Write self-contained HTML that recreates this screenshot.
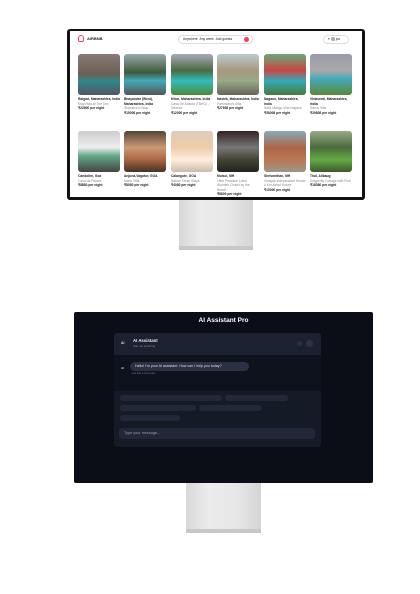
<!DOCTYPE html>
<html><head><meta charset="utf-8"><style>
*{margin:0;padding:0;box-sizing:border-box}
body{width:420px;height:594px;background:#fff;position:relative;overflow:hidden;font-family:"Liberation Sans",sans-serif}
.abs{position:absolute}
.f1{left:67px;top:29px;width:298px;height:171px;background:#111;border-radius:3px}
.s1{left:70px;top:31px;width:292px;height:166px;background:#fff;overflow:hidden}
.stand{background:linear-gradient(90deg,#d8d8d8,#ececec 30%,#e6e6e6 70%,#d4d4d4)}
.card{position:absolute;width:42px;font-size:3.3px;line-height:4.6px;color:#222}
.img{width:42px;height:41px;border-radius:3px;margin-bottom:2px}
.b{font-weight:bold}
.g{color:#888}
.f2{left:74px;top:312px;width:299px;height:171px;background:#0b0d17;border-radius:2px}
.pill{position:absolute;height:6px;border-radius:3px;background:#222838}
</style></head><body>
<div class="abs f1"></div>
<div class="abs s1">
 <div class="abs" style="left:8px;top:4px;width:6px;height:7px;border:1.2px solid #ff385c;border-radius:3px 3px 2px 2px"></div>
 <div class="abs b" style="left:17px;top:5px;font-size:4px;color:#222">AIRBNB</div>
 <div class="abs" style="left:108px;top:4px;width:75px;height:9px;border:1px solid #ddd;border-radius:5px;font-size:3.3px;line-height:7px;padding-left:4px;color:#222">Anywhere &nbsp;Any week &nbsp;Add guests</div>
 <div class="abs" style="left:174px;top:6px;width:5px;height:5px;border-radius:50%;background:#ff385c"></div>
 <div class="abs" style="left:253px;top:4px;width:26px;height:9px;border:1px solid #ddd;border-radius:5px;font-size:3.3px;line-height:7px;padding-left:4px;color:#222">≡ <span style="display:inline-block;width:4px;height:4px;border-radius:50%;background:#aaa;vertical-align:middle"></span> joe</div>
 <div class="card" style="left:8px;top:23px"><div class="img" style="background:linear-gradient(#8a7a78,#6a6054 50%,#2e8a8a 65%,#556)"></div><div class="b">Raigad, Maharashtra, India</div><div class="g">StayVista at The Den</div><div class="b">₹22800 per night</div></div>
 <div class="card" style="left:54px;top:23px"><div class="img" style="background:linear-gradient(#9aa,#3f5a3c 45%,#4ab 65%,#555)"></div><div class="b">Bhayandar (West), Maharashtra, India</div><div class="g">Staydaven Haus</div><div class="b">₹15008 per night</div></div>
 <div class="card" style="left:101px;top:23px"><div class="img" style="background:linear-gradient(#aab,#4a6a40 40%,#3bb 65%,#4a8a3a)"></div><div class="b">Khim, Maharashtra, India</div><div class="g">Casa De Abaida (TBHG) - Dearlax</div><div class="b">₹12000 per night</div></div>
 <div class="card" style="left:147px;top:23px"><div class="img" style="background:linear-gradient(#bcc,#a89880 40%,#9a8 65%,#665)"></div><div class="b">Nashik, Maharashtra, India</div><div class="g">Patrimony's Villa</div><div class="b">₹27608 per night</div></div>
 <div class="card" style="left:194px;top:23px"><div class="img" style="background:linear-gradient(#6a7,#c44 40%,#3ab 65%,#4a7a3a)"></div><div class="b">Nagaon, Maharashtra, India</div><div class="g">Saltz Mango Villa Nagaon</div><div class="b">₹38008 per night</div></div>
 <div class="card" style="left:240px;top:23px"><div class="img" style="background:linear-gradient(#99a,#aaa 40%,#4ab 60%,#5a8a3a)"></div><div class="b">Virtaseral, Maharashtra, India</div><div class="g">Sam's Villa</div><div class="b">₹29808 per night</div></div>
 <div class="card" style="left:8px;top:100px"><div class="img" style="background:linear-gradient(#ccc,#eee 40%,#6a8 60%,#444)"></div><div class="b">Candolim, Goa</div><div class="g">Casa da Palace</div><div class="b">₹8880 per night</div></div>
 <div class="card" style="left:54px;top:100px"><div class="img" style="background:linear-gradient(#543,#c97 40%,#a64 70%,#432)"></div><div class="b">Anjuna-Vagator, GOA</div><div class="g">Mario Villa</div><div class="b">₹8080 per night</div></div>
 <div class="card" style="left:101px;top:100px"><div class="img" style="background:linear-gradient(#dcb,#eca 40%,#fed 70%,#cba)"></div><div class="b">Calangute, GOA</div><div class="g">Nature Fresh Stays</div><div class="b">₹4080 per night</div></div>
 <div class="card" style="left:147px;top:100px"><div class="img" style="background:linear-gradient(#322,#777 40%,#443 70%,#222)"></div><div class="b">Mulsci, MH</div><div class="g">Little Paradise Lotus Wooden Chalet by the Beach</div><div class="b">₹8800 per night</div></div>
 <div class="card" style="left:194px;top:100px"><div class="img" style="background:linear-gradient(#8ab,#a64 40%,#b75 70%,#998)"></div><div class="b">Shrivardhan, MH</div><div class="g">Vinayak Independent House 4 Km Airbnf House</div><div class="b">₹10000 per night</div></div>
 <div class="card" style="left:240px;top:100px"><div class="img" style="background:linear-gradient(#9a8,#4a6a3a 40%,#6a4 70%,#3a5a2a)"></div><div class="b">Thal, Alibaug</div><div class="g">Dragonfly Cottage with Pool</div><div class="b">₹18080 per night</div></div>
</div>
<div class="abs stand" style="left:179px;top:200px;width:74px;height:46px"></div>
<div class="abs" style="left:179px;top:246px;width:74px;height:4px;background:#c8c8c8"></div>

<div class="abs f2"></div>
<div class="abs" style="left:74px;top:317px;width:299px;text-align:center;color:#fff;font-weight:bold;font-size:6.5px">AI Assistant Pro</div>
<div class="abs" style="left:114px;top:333px;width:207px;height:114px;background:#151a27;border-radius:3px;overflow:hidden">
 <div class="abs" style="left:0;top:0;width:207px;height:22px;background:#1b2130"></div>
 <div class="abs b" style="left:7px;top:8px;font-size:3.5px;color:#ddd">AI</div>
 <div class="abs b" style="left:19px;top:5px;font-size:4.3px;color:#eee">AI Assistant</div>
 <div class="abs" style="left:19px;top:11px;font-size:3px;color:#889">Ask me anything</div>
 <div class="abs" style="left:183px;top:8px;width:5px;height:5px;border-radius:50%;background:#2a3040"></div>
 <div class="abs" style="left:192px;top:7px;width:7px;height:7px;border-radius:50%;background:#2c3344"></div>
 <div class="abs" style="left:0;top:22px;width:207px;height:36px;background:#0e121d"></div>
 <div class="abs b" style="left:7px;top:33px;font-size:3px;color:#ccc">AI</div>
 <div class="abs" style="left:16px;top:29px;width:119px;height:9px;border-radius:4.5px;background:#2a3142;color:#dde;font-size:3.6px;line-height:9px;padding-left:5px">Hello! I'm your AI assistant. How can I help you today?</div>
 <div class="abs" style="left:18px;top:40px;font-size:2.3px;color:#778">less than a minute ago</div>
 <div class="pill" style="left:6px;top:62px;width:102px"></div>
 <div class="pill" style="left:111px;top:62px;width:63px"></div>
 <div class="pill" style="left:6px;top:72px;width:76px"></div>
 <div class="pill" style="left:85px;top:72px;width:63px"></div>
 <div class="pill" style="left:6px;top:82px;width:60px"></div>
 <div class="abs" style="left:5px;top:95px;width:196px;height:11px;border-radius:3px;background:#222838;color:#99a;font-size:3.8px;line-height:11px;padding-left:5px">Type your message...</div>
</div>
<div class="abs stand" style="left:186px;top:483px;width:75px;height:47px"></div>
<div class="abs" style="left:186px;top:529px;width:75px;height:4px;background:#c8c8c8"></div>
</body></html>
